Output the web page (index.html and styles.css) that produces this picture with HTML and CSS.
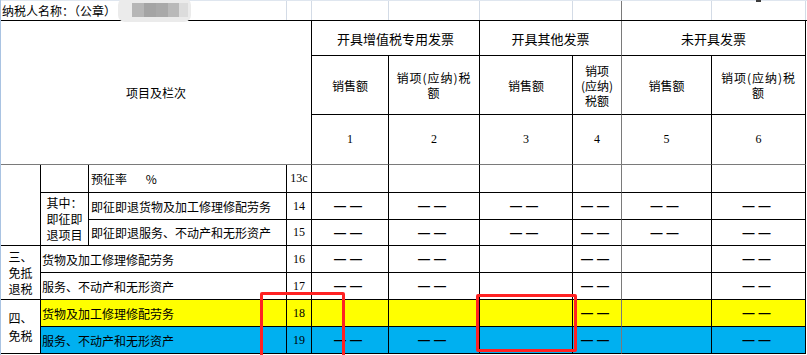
FILE: index.html
```html
<!DOCTYPE html>
<html lang="zh-CN">
<head>
<meta charset="utf-8">
<title>纳税申报表</title>
<link rel="stylesheet" href="styles.css">
</head>
<body>
<div class="sheet">
  <div class="title-row">
    <div class="tcell title-text">纳税人名称：（公章）</div>
    <div class="tcell"></div>
    <div class="tcell"></div>
    <div class="tcell"></div>
    <div class="tcell"></div>
    <div class="tcell split"></div>
    <div class="tcell"></div>
    <div class="tcell"></div>
  </div>
  <div class="table">
    <div class="c span-c4 span-r3 hdr-grey">项目及栏次</div>
    <div class="c span-c2 h1">开具增值税专用发票</div>
    <div class="c span-c2 h1 split">开具其他发票</div>
    <div class="c span-c2 h1">未开具发票</div>

    <div class="c">销售额</div>
    <div class="c sp">销项(应纳)税<br>额</div>
    <div class="c">销售额</div>
    <div class="c split">销项<br>(应纳)<br>税额</div>
    <div class="c">销售额</div>
    <div class="c sp">销项(应纳)税<br>额</div>

    <div class="c num hdr-grey">1</div>
    <div class="c num hdr-grey">2</div>
    <div class="c num hdr-grey">3</div>
    <div class="c num hdr-grey split">4</div>
    <div class="c num hdr-grey">5</div>
    <div class="c num hdr-grey">6</div>

    <!-- 13c -->
    <div class="c span-r3"></div>
    <div class="c"></div>
    <div class="c lbl pre">预征率       %</div>
    <div class="c num">13c</div>
    <div class="c"></div>
    <div class="c"></div>
    <div class="c"></div>
    <div class="c split"></div>
    <div class="c"></div>
    <div class="c"></div>

    <!-- 14 -->
    <div class="c span-r2 side">其中：<br>即征即<br>退项目</div>
    <div class="c lbl">即征即退货物及加工修理修配劳务</div>
    <div class="c num">14</div>
    <div class="c"><span class="dash">——</span></div>
    <div class="c"><span class="dash">——</span></div>
    <div class="c"><span class="dash">——</span></div>
    <div class="c split"><span class="dash">——</span></div>
    <div class="c"><span class="dash">——</span></div>
    <div class="c"><span class="dash">——</span></div>

    <!-- 15 -->
    <div class="c lbl">即征即退服务、不动产和无形资产</div>
    <div class="c num">15</div>
    <div class="c"><span class="dash">——</span></div>
    <div class="c"><span class="dash">——</span></div>
    <div class="c"><span class="dash">——</span></div>
    <div class="c split"><span class="dash">——</span></div>
    <div class="c"><span class="dash">——</span></div>
    <div class="c"><span class="dash">——</span></div>

    <!-- 16 -->
    <div class="c span-r2 side">三、<br>免抵<br>退税</div>
    <div class="c span-c2 lbl wide">货物及加工修理修配劳务</div>
    <div class="c num">16</div>
    <div class="c"><span class="dash">——</span></div>
    <div class="c"><span class="dash">——</span></div>
    <div class="c"></div>
    <div class="c split"><span class="dash">——</span></div>
    <div class="c"></div>
    <div class="c"><span class="dash">——</span></div>

    <!-- 17 -->
    <div class="c span-c2 lbl wide">服务、不动产和无形资产</div>
    <div class="c num">17</div>
    <div class="c"><span class="dash">——</span></div>
    <div class="c"><span class="dash">——</span></div>
    <div class="c"></div>
    <div class="c split"><span class="dash">——</span></div>
    <div class="c"></div>
    <div class="c"><span class="dash">——</span></div>

    <!-- 18 -->
    <div class="c span-r2 side side-tall">四、<br>免税</div>
    <div class="c span-c2 lbl wide yel">货物及加工修理修配劳务</div>
    <div class="c num yel">18</div>
    <div class="c yel"></div>
    <div class="c yel"></div>
    <div class="c yel"></div>
    <div class="c split yel"><span class="dash">——</span></div>
    <div class="c yel"></div>
    <div class="c yel"><span class="dash">——</span></div>

    <!-- 19 -->
    <div class="c span-c2 lbl wide blu">服务、不动产和无形资产</div>
    <div class="c num blu">19</div>
    <div class="c blu"><span class="dash">——</span></div>
    <div class="c blu"><span class="dash">——</span></div>
    <div class="c blu"></div>
    <div class="c split blu"><span class="dash">——</span></div>
    <div class="c blu"></div>
    <div class="c blu"><span class="dash">——</span></div>
  </div>

  <div class="blur"><div class="mosaic"></div></div>
  <div class="tick"></div>
  <div class="mark mark-a"></div>
  <div class="mark mark-b"></div>
</div>
</body>
</html>
```
FILE: styles.css
```css
html, body {
  margin: 0;
  padding: 0;
  background: #ffffff;
}

body {
  font-family: "Noto Sans CJK SC", "Noto Sans", sans-serif;
  font-size: 12px;
  color: #000000;
}

.sheet {
  position: relative;
  width: 806px;
  height: 355px;
  border-left: 1px solid #a9c3e2;
  overflow: hidden;
}

/* title row (spreadsheet gridlines) */
.title-row {
  display: grid;
  grid-template-columns: 286px 25px 77px 91px 93px 49px 90px 94px;
  height: 20px;
  box-sizing: border-box;
  border-top: 1px solid #dfe6ef;
}

.tcell {
  border-right: 1px solid #d3dbe6;
}

.tcell.split {
  border-right-color: #7a7a7a;
}

.title-text {
  padding-left: 1px;
  line-height: 19px;
  font-size: 12px;
  white-space: nowrap;
}

/* the form */
.table {
  display: grid;
  grid-template-columns: 40px 48px 198px 25px 77px 91px 93px 49px 90px 94px;
  grid-template-rows: 35px 59px 50px 28px 27px 26px 27px 27px 27px 27px;
  border-top: 1px solid #000000;
}

.c {
  box-sizing: border-box;
  border-right: 1px solid #000000;
  border-bottom: 1px solid #000000;
  display: flex;
  align-items: center;
  justify-content: center;
  text-align: center;
  line-height: 15px;
  min-width: 0;
  overflow: hidden;
}

.span-c2 { grid-column: span 2; }
.span-c4 { grid-column: span 4; }
.span-r2 { grid-row: span 2; }
.span-r3 { grid-row: span 3; }

.hdr-grey {
  border-bottom-color: #7a7a7a;
}

.split {
  border-right-color: #7a7a7a;
}

.h1 {
  font-size: 13px;
}

.sp {
  letter-spacing: 1px;
}

.num {
  font-family: "Liberation Serif", serif;
  font-size: 12px;
}

.lbl {
  justify-content: flex-start;
  text-align: left;
  padding-left: 2px;
  white-space: nowrap;
}

.lbl.wide {
  padding-left: 1px;
}

.pre {
  white-space: pre;
}

.side {
  line-height: 16px;
  font-size: 12px;
}

.side-tall {
  line-height: 18px;
}

.dash {
  font-family: "Liberation Sans", sans-serif;
  font-weight: 700;
  font-size: 12px;
  letter-spacing: 4px;
  line-height: 12px;
}

.yel {
  background: #ffff00;
}

.blu {
  background: #00b0f0;
}

/* overlays */
.blur {
  position: absolute;
  left: 117px;
  top: -2px;
  width: 73px;
  height: 24px;
  border-radius: 7px;
  background: #ebebeb;
  filter: blur(0.6px);
}

.mosaic {
  position: absolute;
  left: 14px;
  top: 5px;
  width: 56px;
  height: 14px;
  background: linear-gradient(to right,
    #b6b6b6 0, #b6b6b6 12px,
    #a4a4a4 12px, #a4a4a4 24px,
    #a9a9a9 24px, #a9a9a9 36px,
    #b9b9b9 36px, #b9b9b9 47px,
    #dcdcdc 47px, #dcdcdc 56px);
}

.tick {
  position: absolute;
  left: 755px;
  top: 0;
  width: 5px;
  height: 2px;
  background: #3c3c3c;
}

.mark {
  position: absolute;
  box-sizing: border-box;
  border: 3px solid #ff2222;
  border-radius: 2px;
}

.mark-a {
  left: 259px;
  top: 292px;
  width: 85px;
  height: 80px;
}

.mark-b {
  left: 475px;
  top: 294px;
  width: 101px;
  height: 58px;
}
```
